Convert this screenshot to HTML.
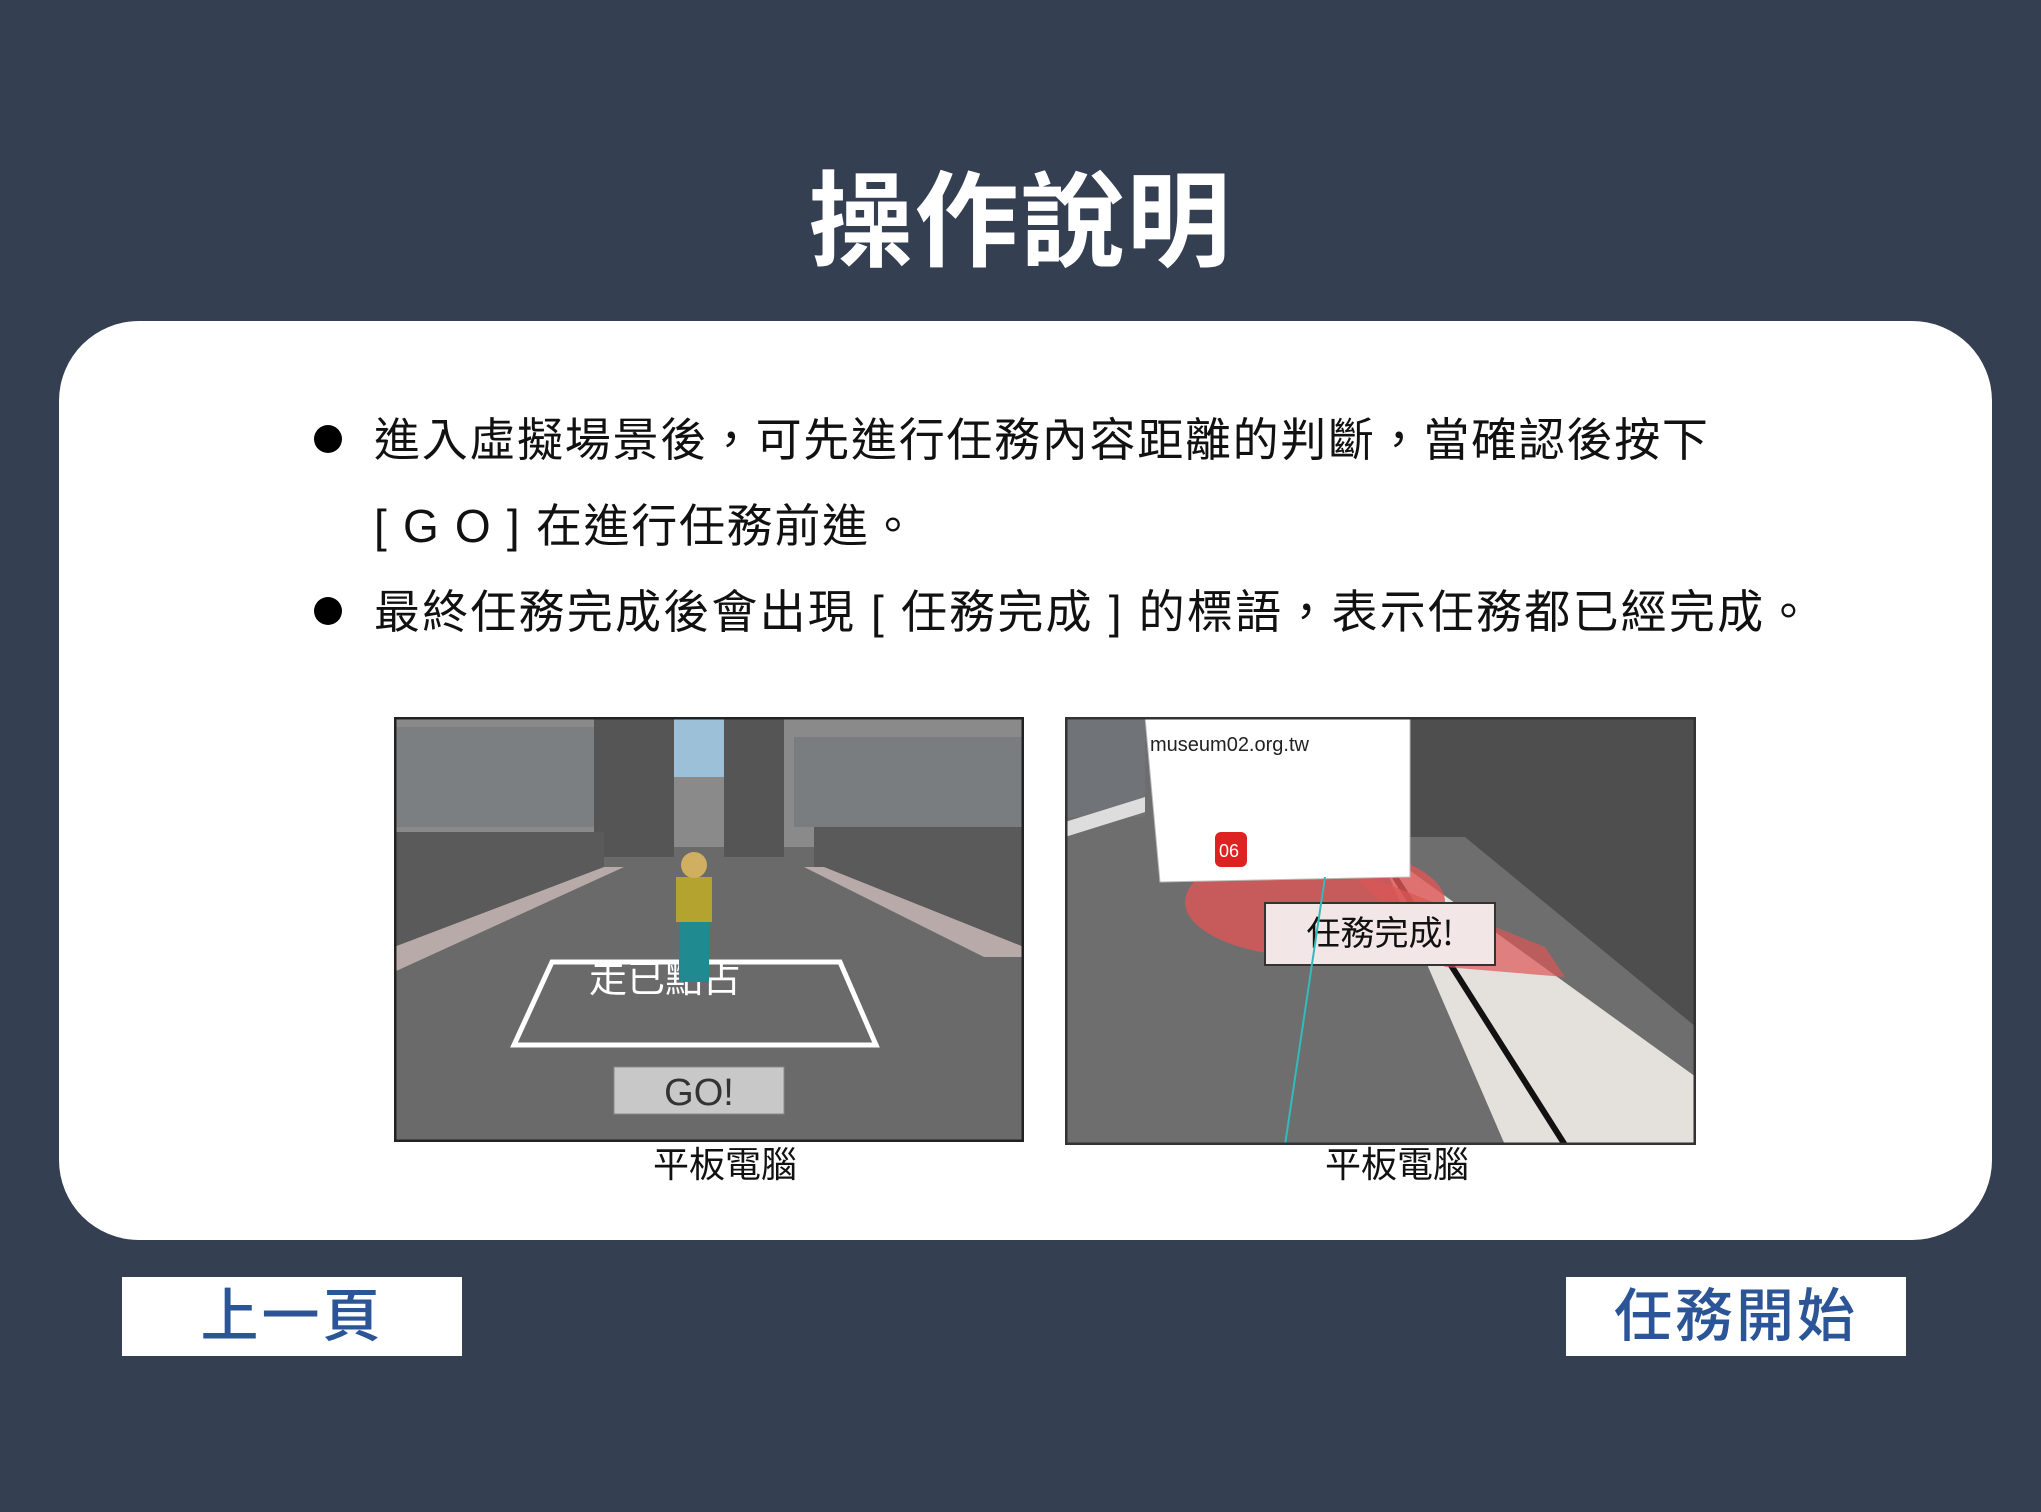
<!DOCTYPE html>
<html><head><meta charset="utf-8"><style>
*{margin:0;padding:0;box-sizing:border-box}
body{width:2041px;height:1512px;background:#343f52;position:relative;overflow:hidden;font-family:"Liberation Sans","Noto Sans CJK TC",sans-serif}
.t{position:absolute;left:0;width:2041px;top:166px;text-align:center;color:#fff;font-size:104px;font-weight:bold;line-height:1.1;letter-spacing:2px}
.card{position:absolute;left:59px;top:321px;width:1933px;height:919px;background:#fff;border-radius:80px}
.l{position:absolute;left:374px;font-size:46px;color:#111;letter-spacing:1.7px;white-space:nowrap;line-height:60px}
.dot{position:absolute;left:314px;width:28px;height:28px;border-radius:50%;background:#000}
.cap{position:absolute;font-size:36px;color:#111;top:1142px;line-height:46px}
.btn{position:absolute;top:1277px;width:340px;height:79px;background:#fff;color:#2c5598;font-size:58px;font-weight:500;text-align:center;line-height:79px;letter-spacing:3px}
svg{position:absolute}
</style></head><body>
<div class="t">操作說明</div>
<div class="card"></div>
<div class="dot" style="top:425px"></div>
<div class="l" style="top:410px">進入虛擬場景後，可先進行任務內容距離的判斷，當確認後按下</div>
<div class="l" style="top:496px">[ G O ] 在進行任務前進。</div>
<div class="dot" style="top:597px"></div>
<div class="l" style="top:582px;letter-spacing:2.2px">最終任務完成後會出現 [ 任務完成 ] 的標語，表示任務都已經完成。</div>

<svg style="left:394px;top:717px" width="630" height="425" viewBox="0 0 630 425">
<rect width="630" height="425" fill="#6a6a6a"/>
<rect x="0" y="0" width="630" height="130" fill="#8a8a8a"/>
<rect x="280" y="0" width="50" height="60" fill="#9cc0d8"/>
<rect x="200" y="0" width="80" height="140" fill="#555"/>
<rect x="330" y="0" width="60" height="140" fill="#555"/>
<rect x="0" y="10" width="200" height="100" fill="#7c7f82"/>
<rect x="400" y="20" width="230" height="90" fill="#7a7d80"/>
<polygon points="0,115 210,115 210,150 0,230" fill="#5a5a5a"/>
<polygon points="630,110 420,110 420,150 630,230" fill="#5a5a5a"/>
<polygon points="0,230 210,150 230,150 0,255" fill="#b8aaa8"/>
<polygon points="630,230 430,150 410,150 590,240 630,240" fill="#b8aaa8"/>
<polygon points="158,245 446,245 482,328 120,328" fill="none" stroke="#fff" stroke-width="5"/>
<text x="195" y="275" font-size="38" fill="#fff" font-family="Noto Sans CJK TC">走已點占</text>
<rect x="285" y="195" width="30" height="70" fill="#1f8a90"/>
<rect x="282" y="160" width="36" height="45" fill="#b5a330"/>
<circle cx="298" cy="178" r="0" fill="#d0b060"/>
<circle cx="300" cy="148" r="13" fill="#d0b060"/>
<rect x="220" y="350" width="170" height="47" fill="#c8c8c8" stroke="#888"/>
<text x="305" y="388" font-size="38" fill="#333" text-anchor="middle">GO!</text>
<rect x="1" y="1" width="628" height="423" fill="none" stroke="#222" stroke-width="3"/>
</svg>

<svg style="left:1065px;top:717px" width="631" height="428" viewBox="0 0 631 428">
<rect width="631" height="428" fill="#6e6e6e"/>
<rect x="0" y="0" width="80" height="100" fill="#707478"/>
<polygon points="330,0 631,0 631,310 400,120 330,120" fill="#4e4e4e"/>
<polygon points="340,150 631,360 631,428 440,428 320,150" fill="#e4e0dc"/>
<line x1="330" y1="160" x2="500" y2="428" stroke="#111" stroke-width="6"/>
<polygon points="0,105 80,80 80,95 0,120" fill="#ddd"/>
<ellipse cx="250" cy="185" rx="130" ry="55" fill="#d55" opacity="0.8"/>
<polygon points="280,150 480,230 500,260 380,250" fill="#d55" opacity="0.7"/>
<polygon points="80,0 345,0 345,160 95,165" fill="#fff" stroke="#bbb"/>
<text x="85" y="34" font-size="20" fill="#222">museum02.org.tw</text>
<rect x="150" y="115" width="32" height="35" rx="6" fill="#d22"/>
<text x="154" y="140" font-size="18" fill="#fff">06</text>
<rect x="200" y="186" width="230" height="62" fill="#f3e6e6" stroke="#333" stroke-width="2"/>
<text x="315" y="228" font-size="34" fill="#111" text-anchor="middle" font-family="Noto Sans CJK TC">任務完成!</text>
<line x1="260" y1="160" x2="220" y2="428" stroke="#3bb" stroke-width="2"/>
<rect x="1" y="1" width="629" height="426" fill="none" stroke="#333" stroke-width="3"/>
</svg>

<div class="cap" style="left:653px">平板電腦</div>
<div class="cap" style="left:1325px">平板電腦</div>
<div class="btn" style="left:122px">上一頁</div>
<div class="btn" style="left:1566px">任務開始</div>
</body></html>
